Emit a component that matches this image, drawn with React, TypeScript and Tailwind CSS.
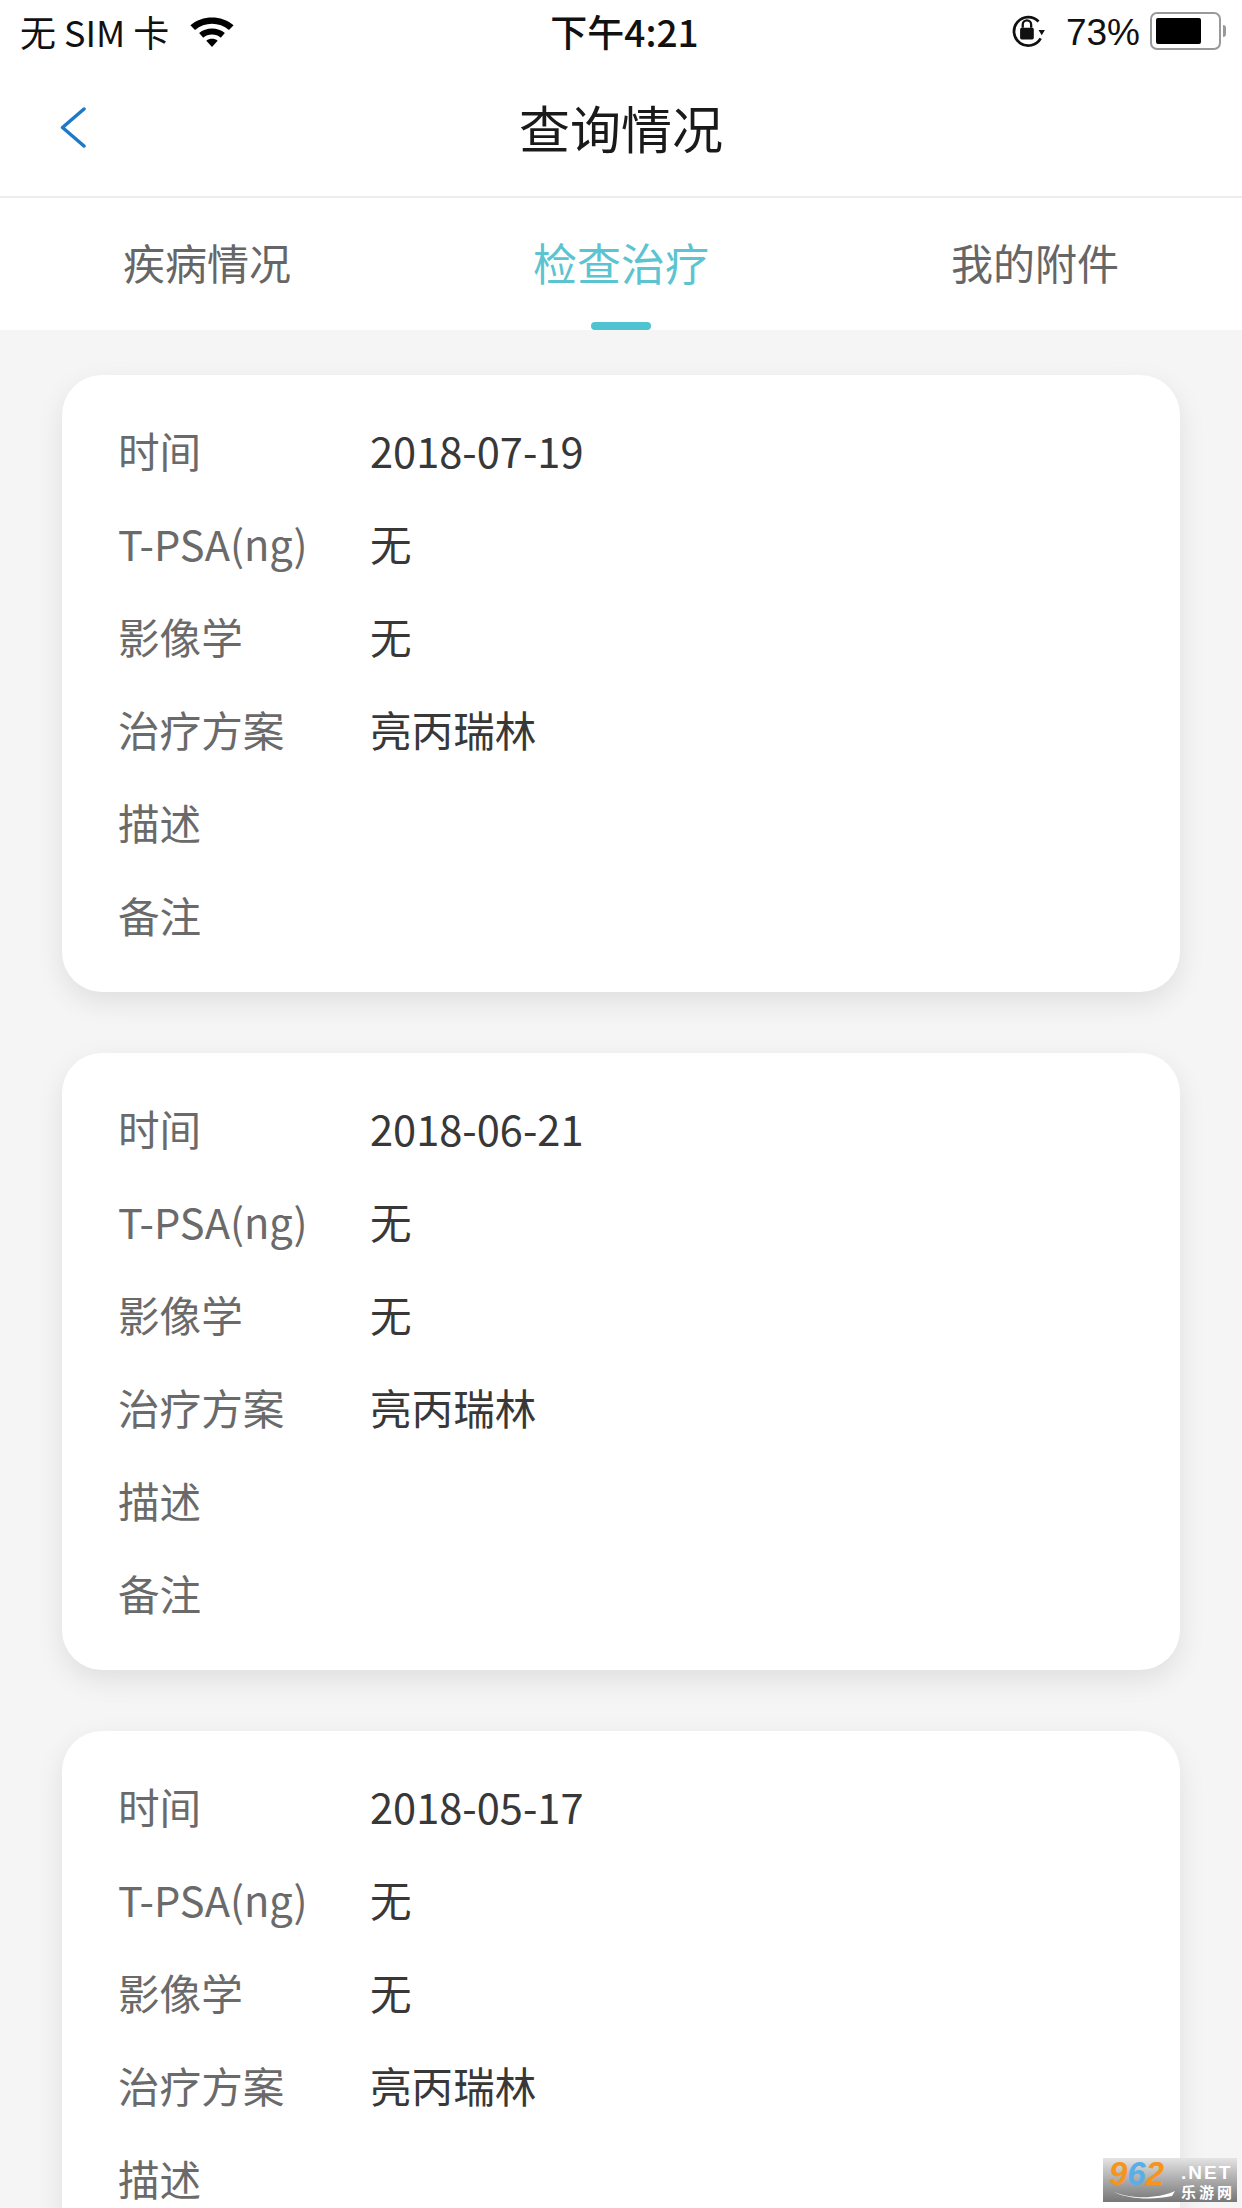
const cjk = "font-['Noto_Sans_CJK_SC','Noto_Sans',sans-serif]";

const records = [
  { time: '2018-07-19' },
  { time: '2018-06-21' },
  { time: '2018-05-17' },
];

const WifiIcon = () => (
  <svg width="46" height="35" viewBox="0 0 44 34" fill="none">
    <path d="M1 11 C13 1 31 1 43 11 L38.5 15.5 C29 7.5 15 7.5 5.5 15.5 Z" fill="#000" />
    <path d="M9.5 18.5 C16 12.5 28 12.5 34.5 18.5 L30.5 23 C26 19 18 19 13.5 23 Z" fill="#000" />
    <path d="M16.5 26 C19.5 23.5 24.5 23.5 27.5 26 L22 32 Z" fill="#000" />
  </svg>
);

const RotationLockIcon = () => (
  <svg width="36" height="38" viewBox="0 0 34 36" fill="none">
    <path d="M27 9 A13.5 13.5 0 1 0 29 25" stroke="#111" strokeWidth="2.6" />
    <path d="M27 17 h6 l-3 5 Z" fill="#111" />
    <rect x="9.5" y="15" width="13" height="11" rx="1.5" fill="#111" />
    <path d="M12 15 v-3 a4 4 0 0 1 8 0 v3" stroke="#111" strokeWidth="2.2" />
  </svg>
);

const BackIcon = () => (
  <svg className="absolute left-[59px] top-[45px]" width="27" height="41" viewBox="0 0 27 41" fill="none">
    <polyline points="25,2 3.5,20.5 25,39" stroke="#1f78c8" strokeWidth="3.5" strokeLinecap="round" strokeLinejoin="round" />
  </svg>
);

const StatusBar = () => (
  <div className="flex h-[62px] items-center justify-between pl-[20px] pr-[16px] text-[#111]">
    <div className="flex w-[400px] items-center gap-[20px]">
      <span className={`${cjk} whitespace-nowrap text-[36px] leading-none`}>无 SIM 卡</span>
      <WifiIcon />
    </div>
    <span className={`${cjk} pl-[3px] text-[37px] font-medium leading-none`}>下午4:21</span>
    <div className="flex w-[400px] items-center justify-end">
      <RotationLockIcon />
      <span className="ml-[20px] pt-[2px] font-['Liberation_Sans',sans-serif] text-[37px] leading-none">73%</span>
      <div className="ml-[10px] flex h-[38px] w-[71px] items-center rounded-[7px] border-2 border-[#999] p-[4px]">
        <div className="h-full w-[45px] rounded-[2px] bg-black" />
      </div>
      <div className="ml-[2px] h-[12px] w-[3px] rounded-r-full bg-[#999]" />
    </div>
  </div>
);

const NavBar = () => (
  <div className="relative flex h-[136px] items-center justify-center border-b-2 border-[#ececec]">
    <BackIcon />
    <h1 className={`${cjk} pb-[4px] text-[51px] font-normal leading-none text-[#1a1a1a]`}>查询情况</h1>
  </div>
);

const Tabs = () => (
  <div className={`${cjk} relative flex h-[132px] bg-white leading-none text-[#666]`}>
    <div className="flex w-[414px] items-center justify-center pb-[5px] text-[42px]">疾病情况</div>
    <div className="flex w-[414px] items-center justify-center pb-[5px] text-[44px] text-[#5cc4d0]">检查治疗</div>
    <div className="flex w-[414px] items-center justify-center pb-[5px] text-[42px]">我的附件</div>
    <div className="absolute bottom-0 left-[591px] h-[8px] w-[60px] rounded-full bg-[#4fc3cf]" />
  </div>
);

const Row = ({ label, value }: { label: string; value?: string }) => (
  <div className="flex h-[93px] items-center">
    <span className="w-[252px] text-[#6a6a6a]">{label}</span>
    {value && <span className="text-[#383838]">{value}</span>}
  </div>
);

const RecordCard = ({ time }: { time: string }) => (
  <div className={`${cjk} h-[617px] shrink-0 rounded-[40px] bg-white px-[56px] pt-[29px] text-[41.6px] leading-none shadow-[0_10px_28px_rgba(0,0,0,0.09)]`}>
    <Row label="时间" value={time} />
    <Row label="T-PSA(ng)" value="无" />
    <Row label="影像学" value="无" />
    <Row label="治疗方案" value="亮丙瑞林" />
    <Row label="描述" />
    <Row label="备注" />
  </div>
);

const Watermark = () => (
  <div className="absolute left-[1103px] top-[2158px] flex h-[44px] w-[134px] bg-gradient-to-b from-[#e4e4e4] to-[#777] pl-[6px] font-['Liberation_Sans',sans-serif] leading-none">
    <div className="flex w-[72px] flex-col">
      <span className="text-[33px] font-bold italic leading-[31px] text-[#f7941d]">9<span className="text-[#5aaee8]">6</span>2</span>
      <svg width="68" height="11" viewBox="0 0 68 11" fill="none">
        <path d="M1 1 C20 11 48 10 66 2 L63 7 C45 11 18 11 1 1 Z" fill="#fff" />
      </svg>
    </div>
    <div className="flex flex-col pt-[5px]">
      <span className="whitespace-nowrap text-[19px] font-bold leading-[20px] tracking-[2px] text-white">.NET</span>
      <span className={`${cjk} whitespace-nowrap text-[15px] font-bold leading-[17px] tracking-[3px] text-white`}>乐游网</span>
    </div>
  </div>
);

const App = () => {
  return (
    <div className="relative h-[2208px] w-[1242px] overflow-hidden bg-[#f5f5f5]">
      <div className="bg-white">
        <StatusBar />
        <NavBar />
        <Tabs />
      </div>
      <div className="flex flex-col gap-[61px] px-[62px] pt-[45px]">
        {records.map((record) => (
          <RecordCard key={record.time} time={record.time} />
        ))}
      </div>
      <Watermark />
    </div>
  );
};

export default App;
